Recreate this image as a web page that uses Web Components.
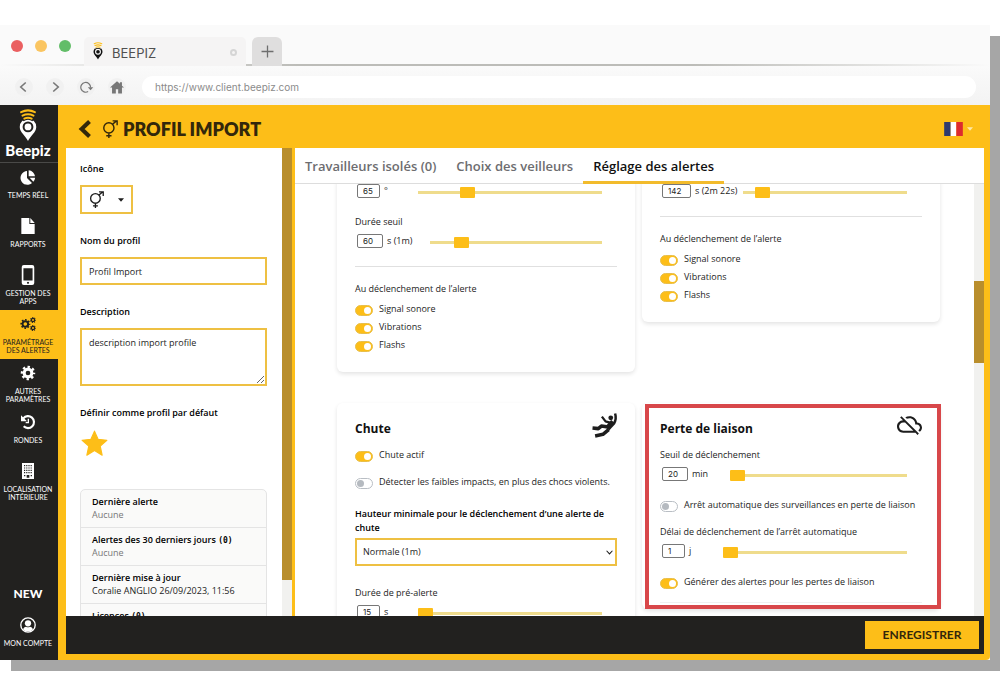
<!DOCTYPE html>
<html lang="fr">
<head>
<meta charset="utf-8">
<meta name="viewport" content="width=device-width, initial-scale=1">
<title>Beepiz – Profil Import</title>
<style>
  :root {
    --yellow: #fdbe18;
    --dark: #22211f;
    --ink: #1d1d1d;
    --track: #efdc8c;
    --thumb: #b98e2c;
  }
  body { margin: 0; background: #fff; color: var(--ink); font: 9px/14px "Open Sans", "Liberation Sans", sans-serif; }
</style>
</head>
<body>
<bz-browser tab-title="BEEPIZ" url="https://www.client.beepiz.com">
  <bz-app></bz-app>
</bz-browser>

<script>
const define = (name, css, html) => {
  customElements.define(name, class extends HTMLElement {
    connectedCallback() {
      if (this.shadowRoot) return;
      const root = this.attachShadow({ mode: "open" });
      const body = typeof html === "function" ? html(this) : html;
      root.innerHTML = `<style>*{box-sizing:border-box}${css}</style>${body}`;
    }
  });
};
const attr = (el, name, fallback = "") => el.getAttribute(name) ?? fallback;

/* A toothed wheel: ring plus dashed outer stroke for the teeth. */
const gear = (x, y, r, w, n) => {
  const tooth = (Math.PI * 2 * (r + w * .7)) / (n * 2);
  return `<g fill="none" stroke="currentColor"><circle cx="${x}" cy="${y}" r="${r}" stroke-width="${w}"/><circle cx="${x}" cy="${y}" r="${r + w * .7}" stroke-width="${w * .8}" stroke-dasharray="${tooth}" stroke-dashoffset="${tooth / 2}"/></g>`;
};
const pin = (body, hole, waves) => `
  <path d="M12 10.500a9 9 0 0 0-9 9c0 6 6.500 9.500 9 15.500 2.500-6 9-9.500 9-15.500a9 9 0 0 0-9-9z" fill="${body}"/>
  <circle cx="12" cy="19.500" r="4.800" fill="${body}" stroke="${hole}" stroke-width="2.200"/>
  <path d="M6.500 12.500q5.500-4 11 0" fill="none" stroke="${hole}" stroke-width="2.200"/>
  <g fill="none" stroke="${waves}" stroke-width="2.200" stroke-linecap="round"><path d="M4.500 3.500q7.500-4 15 0"/><path d="M6 7.200q6-3 12 0"/><path d="M8 10.500q4-2 8 0"/></g>`;

const icons = {
  logo: ["0 0 24 36", pin("#fff", "#22211f", "#fdbe18")],
  favicon: ["0 0 24 36", pin("#111", "#fff", "#fdbe18")],
  pie: ["0 0 24 24", `<path fill="currentColor" d="M10.500 3v10.500l7.500 7.400A10.300 10.300 0 1 1 10.500 3z"/><path fill="currentColor" d="M13 2a10 10 0 0 1 9.500 9H13zM14.500 13.200h8.200a10 10 0 0 1-2.700 5.800z"/>`],
  file: ["0 0 24 24", `<path fill="currentColor" d="M2 0h12v9h8v15H2z"/><path fill="currentColor" d="M15.500 0L22 7.500h-6.500z"/>`],
  phone: ["0 0 24 24", `<path fill="currentColor" fill-rule="evenodd" d="M7 0h10a2.500 2.500 0 0 1 2.500 2.500v19A2.500 2.500 0 0 1 17 24H7a2.500 2.500 0 0 1-2.500-2.500v-19A2.500 2.500 0 0 1 7 0zM6.500 4v14.500h11V4zM12 20a1.300 1.300 0 1 0 .01 0z"/>`],
  gears: ["0 0 24 24", gear(8, 12, 4.2, 3, 8) + gear(19.5, 6, 2.4, 1.9, 7) + gear(19.5, 18, 2.4, 1.9, 7)],
  gear: ["0 0 24 24", gear(12, 12, 5.8, 4.6, 8)],
  history: ["0 0 24 24", `<path d="M5 6.500A9 9 0 1 1 5.500 18.500" fill="none" stroke="currentColor" stroke-width="3.200"/><path d="M1.500 2v9h9z" fill="currentColor"/><path d="M12.500 7v6H8.500" fill="none" stroke="currentColor" stroke-width="2"/>`],
  building: ["0 0 24 24", `<path fill="currentColor" d="M3 0h18v24H3z"/><g stroke="#22211f" stroke-width="1.800" stroke-dasharray="1.800 1.500"><path d="M6 4h12.500M6 7.500h12.500M6 11h12.500M6 14.500h12.500"/></g><path d="M6 18h2v2H6zM16 18h2v2h-2zM10 18h4v4h-4z" fill="#22211f"/>`],
  user: ["0 0 24 24", `<circle cx="12" cy="12" r="10.800" fill="none" stroke="currentColor" stroke-width="2"/><circle cx="12" cy="9.500" r="4.700" fill="currentColor"/><path fill="currentColor" d="M4.500 18.500c1-3 3.500-4 4.500-4q3 2 6 0c1 0 3.500 1 4.500 4a10 10 0 0 1-15 0z"/>`],
  back: ["0 0 24 24", `<path d="M18 2L7.500 12 18 22" fill="none" stroke="currentColor" stroke-width="5.500"/>`],
  chevronLeft: ["0 0 24 24", `<path d="M15.500 3l-10 9 10 9" fill="none" stroke="currentColor" stroke-width="3.200"/>`],
  chevronRight: ["0 0 24 24", `<path d="M8.500 3l10 9-10 9" fill="none" stroke="currentColor" stroke-width="3.200"/>`],
  reload: ["0 0 24 24", `<path d="M15 19.500A9 9 0 1 1 19.500 12" fill="none" stroke="currentColor" stroke-width="2.200"/><path d="M14.500 11.500H24.500L19.500 17z" fill="currentColor"/>`],
  home: ["0 0 24 24", `<path fill="currentColor" d="M12 2L0 13h3.500v10H10v-7h4v7h6.500V13H24l-3.500-3.300V4H17v2.500z"/>`],
  plus: ["0 0 24 24", `<path d="M12 1v22M1 12h22" stroke="currentColor" stroke-width="2.400"/>`],
  gender: ["0 0 24 24", `<g fill="none" stroke="currentColor" stroke-width="1.900"><circle cx="10.500" cy="10.500" r="6.800"/><path d="M15.500 5.500L21 1M15.500 1.200H21.500V7M10.500 17.500V24M7 21h7"/></g>`],
  star: ["0 0 24 24", `<path fill="currentColor" stroke="currentColor" stroke-linejoin="round" d="M12 1l3.200 7.300 7.800.8-5.900 5.300 1.700 8L12 18.300l-6.800 4.100 1.700-8L1 9.100l7.800-.8z"/>`],
  fall: ["0 0 24 24", `<g fill="none" stroke="currentColor" stroke-linejoin="round"><path stroke-width="2.200" d="M9.500 3.500L13 8l5 1.500"/><path stroke-width="2.400" d="M21 10q2.800-4 1.200-9.500"/><path stroke-width="5.500" d="M20.500 8.500L14.500 15"/><path stroke-width="3.400" d="M15.500 13.500L9 12.500l-3 2.500-5.500-.5M16 16l-5.500 4.500L3 22"/></g><circle cx="18" cy="4.600" r="2.300" fill="currentColor"/>`],
  cloudOff: ["0 1 24 24", `<path fill="currentColor" d="M19.350 10.040C18.670 6.590 15.640 4 12 4c-1.480 0-2.850.430-4.010 1.170l1.460 1.460C10.210 6.230 11.080 6 12 6c3.040 0 5.500 2.460 5.500 5.500v.5H19c1.660 0 3 1.340 3 3 0 1.130-.64 2.110-1.560 2.620l1.450 1.450C23.160 18.160 24 16.680 24 15c0-2.640-2.050-4.780-4.650-4.960zM3 5.270l2.750 2.740C2.560 8.150 0 10.770 0 14c0 3.310 2.690 6 6 6h11.730l2 2L21 20.730 4.270 4 3 5.270zM7.730 10l8 8H6c-2.210 0-4-1.790-4-4s1.790-4 4-4h1.730z"/>`],
  caret: ["0 0 24 24", `<path fill="currentColor" d="M0 5h24L12 19z"/>`],
  down: ["0 0 24 24", `<path d="M2 6l10 11L22 6" fill="none" stroke="currentColor" stroke-width="3.500"/>`],
  flag: ["0 0 20 15", `<path fill="#2f3a6e" d="M0 0h7v15H0z"/><path fill="#fff" d="M7 0h6v15H7z"/><path fill="#dd2b2f" d="M13 0h7v15h-7z"/>`]
};

define("bz-icon",
  `:host{display:block;flex:none;width:var(--w,16px);height:var(--h,var(--w,16px))} svg{display:block;width:100%;height:100%;overflow:visible}`,
  el => { const [box, art] = icons[attr(el, "name")]; return `<svg viewBox="${box}" aria-hidden="true">${art}</svg>`; });

/* Browser chrome */
define("bz-browser", `
  :host{display:flex;flex-direction:column;height:100vh;padding:25px 10px 40px 0;box-sizing:border-box}
  .window{flex:1;min-height:0;display:flex;flex-direction:column;background:#fafafa;box-shadow:11px 11px 0 #a6a6a6}
  .strip{height:41px;flex:none;display:flex;align-items:flex-end;padding-left:11px;background:linear-gradient(90deg,transparent,#bcbcb8 30%,#bcbcb8 70%,transparent) bottom/100% 2px no-repeat}
  .dots{display:flex;gap:12px;align-self:center;margin-right:13px}
  .dots i{width:12px;height:12px;border-radius:50%;background:#ea5f60}
  .dots i:nth-child(2){background:#fac561}.dots i:nth-child(3){background:#62bd68}
  .tab{width:162px;height:29px;display:flex;align-items:center;gap:8px;padding:2px 9px 0 8px;background:#f5f4f4;border-radius:5px 5px 0 0;font:13px/16px Inter,sans-serif;color:#505050}
  .tab b{font-weight:400;flex:1}
  .tab bz-icon{margin-bottom:4px}
  .tab u{width:7px;height:7px;border:2px solid #d5d5d5;border-radius:50%}
  button{font:inherit;border:0;padding:0;background:none;color:#777;display:grid;place-items:center}
  .new{width:30px;height:29px;margin-left:6px;background:#dfdede;border-radius:6px 6px 0 0;color:#6e6e6e}
  .bar{height:39px;flex:none;display:flex;align-items:center;gap:13px;padding:3px 14px 0 15px;background:linear-gradient(#fafafa,#f3f3f3)}
  .bar button{width:18px;height:18px;border-radius:50%;background:#f1f1f1}
  .bar input{flex:1;min-width:0;height:22px;margin-left:3px;border:0;border-radius:11px;padding:0 13px;background:#fff;color:#8b8b8b;font:10px/14px Inter,sans-serif}
  main{flex:1;min-height:0;display:flex}
  ::slotted(*){flex:1;min-width:0}`,
  el => `<div class="window">
    <div class="strip"><div class="dots"><i></i><i></i><i></i></div>
      <div class="tab"><bz-icon name="favicon" style="--w:12px;--h:18px"></bz-icon><b>${attr(el, "tab-title")}</b><u></u></div>
      <button class="new" aria-label="Nouvel onglet"><bz-icon name="plus" style="--w:13px"></bz-icon></button></div>
    <div class="bar">
      <button aria-label="Précédent"><bz-icon name="chevronLeft" style="--w:12px"></bz-icon></button>
      <button aria-label="Suivant"><bz-icon name="chevronRight" style="--w:12px"></bz-icon></button>
      <button aria-label="Recharger"><bz-icon name="reload" style="--w:13px"></bz-icon></button>
      <button aria-label="Accueil"><bz-icon name="home" style="--w:14px"></bz-icon></button>
      <input aria-label="Adresse" value="${attr(el, "url")}">
    </div>
    <main><slot></slot></main></div>`);

/* Sidebar entry */
define("bz-nav-item", `
  :host{display:block;color:#fff}
  :host([active]){background:var(--yellow);color:var(--dark)}
  a{display:flex;flex-direction:column;align-items:center;height:49px;padding:4px 2px 0 0;color:inherit;text-decoration:none;text-align:center;font:7px/8px Lato,sans-serif}
  .pic{height:20px;margin-bottom:4px;display:grid;place-items:center}`,
  el => `<a href="#"><span class="pic"><bz-icon name="${attr(el, "icon")}" style="--w:${attr(el, "size", "16px")}"></bz-icon></span><span><slot></slot></span></a>`);

/* On/off switch with its label */
define("bz-switch", `
  :host{display:block}
  label{display:flex;align-items:center;gap:6px;line-height:18px;white-space:nowrap}
  input{appearance:none;flex:none;width:18px;height:11px;margin:2px 0 0;border:1px solid #b9bec4;border-radius:6px;background:#fff;display:flex;align-items:center;padding:0 1px}
  input::before{content:"";width:7px;height:7px;border-radius:50%;background:#b5bac0}
  input:checked{background:var(--yellow);border-color:#e8bf4c;justify-content:flex-end}
  input:checked::before{background:#fff}`,
  el => `<label><input type="checkbox" ${el.hasAttribute("checked") ? "checked" : ""}><span><slot></slot></span></label>`);

/* Number box, unit and slider */
define("bz-slider", `
  :host{display:block}
  .cap{display:block;margin-bottom:5px}
  .row{display:grid;grid-template-columns:var(--lead,63px) 1fr;align-items:center;height:14px;padding-right:15px}
  .lead{display:flex;align-items:center;gap:4px;white-space:nowrap}
  .num{width:var(--box,26px);height:14px;margin-left:2px;padding:0 0 0 5px;border:1px solid #777;border-radius:2px;background:#fff;color:inherit;font:8px/12px Inter,sans-serif}
  .range{appearance:none;width:100%;height:11px;margin:3px 0 0;background:linear-gradient(var(--track),var(--track)) center/100% 3px no-repeat}
  .range::-webkit-slider-thumb{appearance:none;width:15px;height:11px;border-radius:1px;background:var(--yellow)}`,
  el => { const l = attr(el, "label"), hidden = attr(el, "aria", l);
    return `${l ? `<label class="cap" for="n">${l}</label>` : ""}<div class="row"><span class="lead"><input class="num" id="n" aria-label="${hidden}" value="${attr(el, "value")}"><span>${attr(el, "unit")}</span></span><input class="range" type="range" aria-label="${hidden}" min="0" max="100" value="${attr(el, "at", "0")}"></div>`; });

/* Settings card */
define("bz-card", `
  :host{display:block;position:relative;background:#fff;border-radius:6px;box-shadow:0 2px 4px rgba(0,0,0,.11);padding:8px 18px 18px}
  :host([heading]){padding-top:10px}
  :host([marked]){padding-bottom:6px}
  header{display:flex;justify-content:space-between;align-items:flex-start;height:33px}
  h2{margin:8px 0 0;font-size:12px;line-height:16px;font-weight:700;color:#111}
  .mark{position:absolute;inset:1px -1px 0 3px;border:4px solid #d8474a;pointer-events:none}`,
  el => `${el.hasAttribute("heading") ? `<header><h2>${attr(el, "heading")}</h2><bz-icon name="${attr(el, "icon")}" style="--w:25px"></bz-icon></header>` : ""}<slot></slot>${el.hasAttribute("marked") ? `<div class="mark"></div>` : ""}`);

/* The three reactions offered when an alert fires */
define("bz-reactions", `
  :host{display:block;border-top:1px solid #e0e0e0;margin-top:18px;padding-top:15px}
  p{margin:0 0 4px}`,
  `<p>Au déclenchement de l’alerte</p><bz-switch checked>Signal sonore</bz-switch><bz-switch checked>Vibrations</bz-switch><bz-switch checked>Flashs</bz-switch>`);

define("bz-scrollbar", `
  :host{display:flex;flex-direction:column;flex:none;width:10px;background:#f1f1ef}
  .space{flex:var(--before,0)}.thumb{flex:var(--size,1);background:var(--thumb)}.rest{flex:var(--after,1)}`,
  `<div class="space"></div><div class="thumb"></div><div class="rest"></div>`);

/* Profile form on the left */
define("bz-profile", `
  :host{display:block;padding:14px 15px 0 14px;overflow:hidden}
  label,h3{display:block;margin:0;font-size:9px;line-height:14px;font-weight:600;color:#000}
  .field{margin-bottom:20px}
  .pick,input,textarea{display:block;box-sizing:border-box;margin-top:9px;border:2px solid #eec043;background:#fff;color:inherit;font:inherit}
  .pick{display:flex;align-items:center;justify-content:space-between;width:53px;height:29px;padding:0 7px 0 6px}
  input{width:100%;height:28px;padding:0 7px}
  textarea{width:100%;height:58px;padding:6px 7px;resize:vertical}
  .star{border:0;padding:0;background:none;color:var(--yellow);display:block;margin:10px 0 32px 1px}
  dl{margin:0;border:1px solid #e4e4e4;border-radius:5px 5px 0 0;background:#fafaf9}
  dl div{height:38px;padding:5px 11px 0;line-height:13px;border-bottom:1px solid #e4e4e4}
  dt{font-weight:600;color:#000;white-space:nowrap}dd{margin:0;white-space:nowrap}.none{color:#777}
  code{font:700 8px/8px "DejaVu Sans Mono",monospace}`,
  `<div class="field"><label for="i">Icône</label><button class="pick" id="i"><bz-icon name="gender" style="--w:17px"></bz-icon><bz-icon name="caret" style="--w:6px"></bz-icon></button></div>
   <div class="field"><label for="n">Nom du profil</label><input id="n" value="Profil Import"></div>
   <div class="field"><label for="d">Description</label><textarea id="d">description import profile</textarea></div>
   <h3>Définir comme profil par défaut</h3>
   <button class="star" aria-label="Profil par défaut"><bz-icon name="star" style="--w:27px"></bz-icon></button>
   <dl><div><dt>Dernière alerte</dt><dd class="none">Aucune</dd></div>
   <div><dt>Alertes des 30 derniers jours <code>(0)</code></dt><dd class="none">Aucune</dd></div>
   <div><dt>Dernière mise à jour</dt><dd>Coralie ANGLIO 26/09/2023, 11:56</dd></div>
   <div><dt>Licences <code>(0)</code></dt></div></dl>`);

/* Alert settings grid */
define("bz-alerts", `
  :host{display:block;overflow:hidden;padding:0 34px 0 42px;min-height:0}
  .grid{display:grid;grid-template-columns:1fr 1fr;column-gap:7px;row-gap:31px;align-items:start;margin-top:-8px}
  .next{margin-top:17px}
  label.strong{display:block;font-weight:600;color:#000;margin:16px 0 3px}
  .select{display:grid;align-items:center}
  .select>*{grid-area:1/1}
  .select bz-icon{justify-self:end;margin-right:4px;pointer-events:none}
  select{appearance:none;width:100%;height:28px;border:2px solid #eec043;border-radius:0;background:#fff;padding:0 6px;color:inherit;font:inherit}
  .sep{border-top:1px solid #f0f0f0;margin-top:11px}`,
  `<div class="grid">
    <bz-card><bz-slider aria="Angle" value="65" unit="°" at="25" style="--lead:63px;--box:23px"></bz-slider>
      <bz-slider class="next" label="Durée seuil" value="60" unit="s (1m)" at="15" style="--lead:75px"></bz-slider>
      <bz-reactions></bz-reactions></bz-card>
    <bz-card><bz-slider aria="Durée" value="142" unit="s (2m 22s)" at="8" style="--lead:83px;--box:29px"></bz-slider>
      <bz-reactions></bz-reactions></bz-card>
    <bz-card heading="Chute" icon="fall">
      <bz-switch checked>Chute actif</bz-switch>
      <bz-switch style="margin-top:9px">Détecter les faibles impacts, en plus des chocs violents.</bz-switch>
      <label class="strong" for="h">Hauteur minimale pour le déclenchement d’une alerte de chute</label>
      <div class="select"><select id="h"><option>Normale (1m)</option></select><bz-icon name="down" style="--w:7px"></bz-icon></div>
      <bz-slider label="Durée de pré-alerte" value="15" unit="s" style="margin-top:20px;--lead:63px;--box:23px"></bz-slider></bz-card>
    <bz-card heading="Perte de liaison" icon="cloudOff" marked>
      <bz-slider label="Seuil de déclenchement" value="20" unit="min" style="margin-top:2px;--lead:70px"></bz-slider>
      <bz-switch style="margin-top:15px">Arrêt automatique des surveillances en perte de liaison</bz-switch>
      <bz-slider label="Délai de déclenchement de l’arrêt automatique" value="1" unit="j" style="margin-top:11px;--lead:63px;--box:23px"></bz-slider>
      <bz-switch checked style="margin-top:15px">Générer des alertes pour les pertes de liaison</bz-switch>
      <div class="sep"></div></bz-card>
  </div>`);

/* Application shell */
define("bz-app", `
  :host{display:grid;grid-template-columns:58px 1fr;background:var(--yellow);border-radius:0 0 4px 0;min-height:0}
  nav{display:flex;flex-direction:column;background:var(--dark);color:#fff}
  .logo{display:flex;flex-direction:column;align-items:center;height:58px;padding:4px 2px 0 0;border-bottom:1px solid #4a4a48;font:900 15px/17px Lato,sans-serif}
  .new{margin-top:auto;padding-right:2px;text-align:center;font:900 12px/16px Lato,sans-serif;margin-bottom:9px}
  .body{display:flex;flex-direction:column;min-width:0;min-height:0;padding:0 6px 6px 8px}
  .head{display:flex;align-items:center;height:43px;flex:none;padding:5px 11px 0 10px;color:#33270b}
  .head a{color:inherit;display:block;margin-right:7px}
  h1{flex:1;margin:0 0 0 4px;font:800 18px/24px Lato,sans-serif}
  .lang{display:flex;align-items:center;gap:4px;border:0;background:none;padding:0;color:#ffe9a8}
  .panes{flex:1;min-height:0;display:grid;grid-template-columns:216px 10px 1fr;background:#fff}
  .right{display:flex;flex-direction:column;min-width:0;min-height:0;border-left:3px solid var(--yellow)}
  .tabs{display:flex;height:36px;flex:none;border-bottom:1px solid #ddd}
  .tabs a{padding:0 10px;height:36px;line-height:36px;font-size:13px;font-weight:600;color:#6d6d70;text-decoration:none;white-space:nowrap}
  .tabs a.on{color:#111;border-bottom:3px solid #f2bb2c}
  .scroll{flex:1;min-height:0;display:grid;grid-template-columns:1fr 10px;grid-template-rows:minmax(0,1fr)}
  footer{flex:none;display:flex;justify-content:flex-end;padding:5px 5px 5px 0;background:var(--dark)}
  footer button{width:114px;height:28px;border:0;background:var(--yellow);color:#33270b;font:700 12px/16px Lato,sans-serif}
  bz-profile{min-height:0}`,
  `<nav><div class="logo"><bz-icon name="logo" style="--w:22px;--h:33px"></bz-icon><span>Beepiz</span></div>
    <bz-nav-item icon="pie">TEMPS RÉEL</bz-nav-item>
    <bz-nav-item icon="file">RAPPORTS</bz-nav-item>
    <bz-nav-item icon="phone" size="20px">GESTION DES<br>APPS</bz-nav-item>
    <bz-nav-item icon="gears" active>PARAMÉTRAGE<br>DES ALERTES</bz-nav-item>
    <bz-nav-item icon="gear">AUTRES<br>PARAMÈTRES</bz-nav-item>
    <bz-nav-item icon="history">RONDES</bz-nav-item>
    <bz-nav-item icon="building">LOCALISATION<br>INTÉRIEURE</bz-nav-item>
    <div class="new">NEW</div>
    <bz-nav-item icon="user">MON COMPTE</bz-nav-item></nav>
   <div class="body">
    <div class="head"><a href="#" aria-label="Retour"><bz-icon name="back" style="--w:18px;--h:20px"></bz-icon></a><bz-icon name="gender" style="--w:18px"></bz-icon><h1>PROFIL IMPORT</h1>
      <button class="lang" aria-label="Langue"><bz-icon name="flag" style="--w:19px;--h:14px"></bz-icon><bz-icon name="caret" style="--w:6px"></bz-icon></button></div>
    <div class="panes"><bz-profile></bz-profile><bz-scrollbar style="--size:432;--after:36"></bz-scrollbar>
      <div class="right"><div class="tabs"><a href="#">Travailleurs isolés (0)</a><a href="#">Choix des veilleurs</a><a href="#" class="on">Réglage des alertes</a></div>
        <div class="scroll"><bz-alerts></bz-alerts><bz-scrollbar style="--before:97;--size:82;--after:253"></bz-scrollbar></div></div></div>
    <footer><button>ENREGISTRER</button></footer></div>`);
</script>
</body>
</html>
